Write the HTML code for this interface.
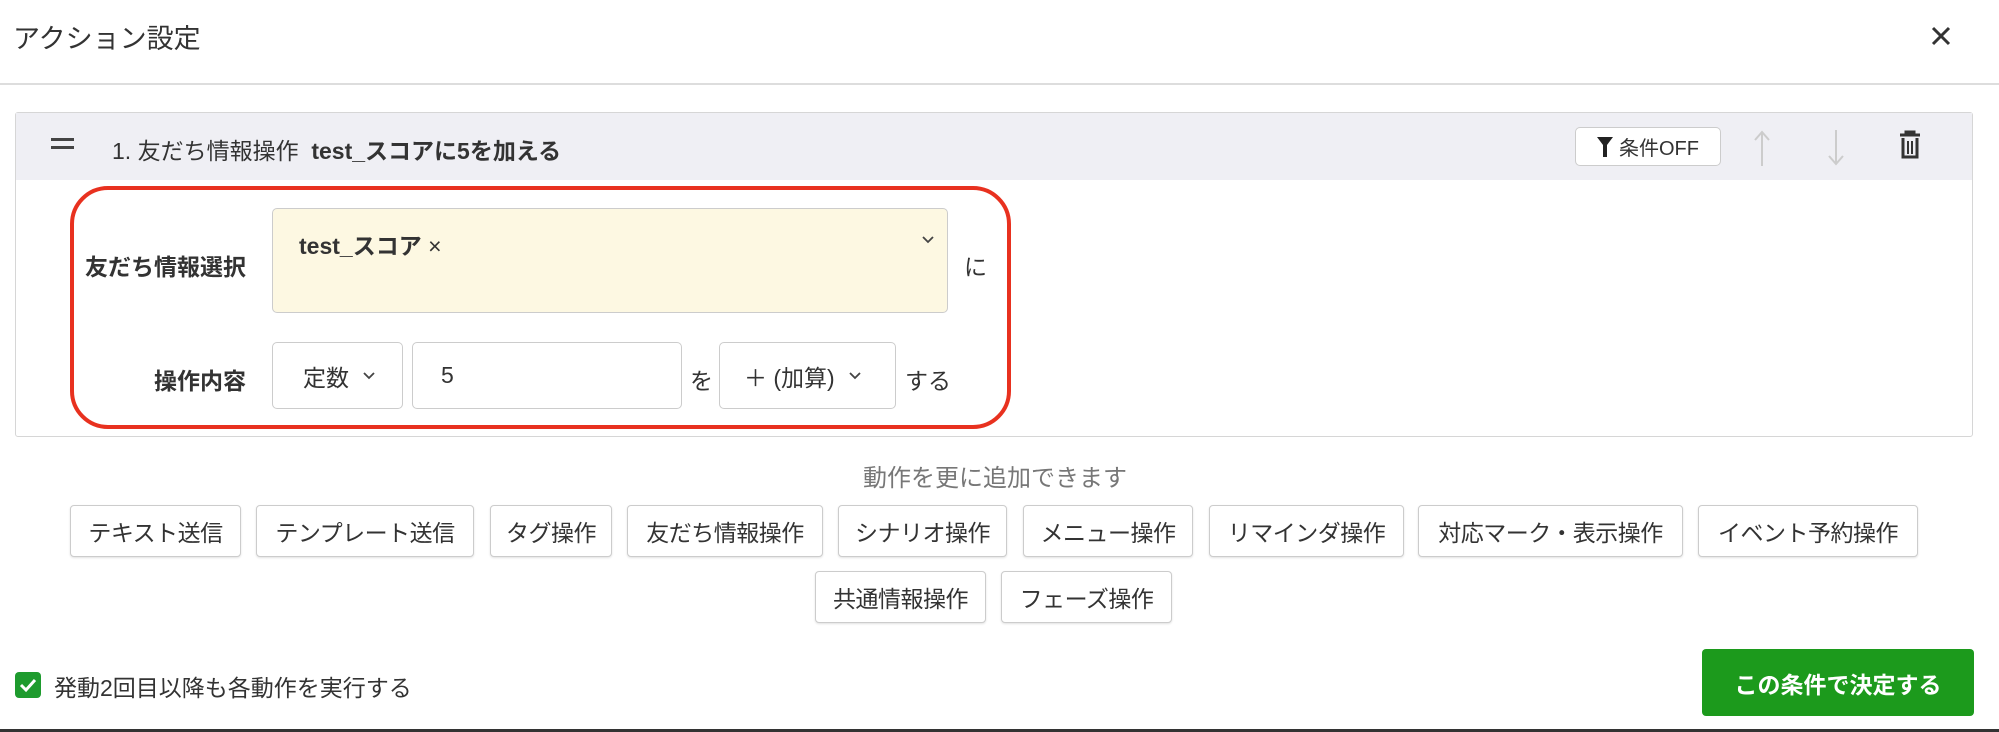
<!DOCTYPE html>
<html><head><meta charset="utf-8"><style>
*{box-sizing:border-box;margin:0;padding:0}
body{width:1999px;height:732px;background:#fff;font-family:"Liberation Sans","Noto Sans CJK JP",sans-serif;color:#333;position:relative;overflow:hidden}
.a{position:absolute}
.btn{position:absolute;top:505px;height:52px;border:1px solid #ccc;border-radius:4px;background:#fff;font-size:23px;letter-spacing:-0.5px;color:#333;display:flex;align-items:center;justify-content:center;box-shadow:0 1px 2px rgba(0,0,0,.12);white-space:nowrap}
.box{position:absolute;border:1px solid #ccc;border-radius:5px;background:#fff;font-size:23px;display:flex;align-items:center}
</style></head><body>
<div class="a" style="left:13px;top:17px;font-size:27px;color:#333">アクション設定</div>
<svg class="a" style="left:1930px;top:25px" width="22" height="22" viewBox="0 0 22 22"><path d="M3 3L19 19M19 3L3 19" stroke="#333" stroke-width="3"/></svg>
<div class="a" style="left:0;top:83px;width:1999px;height:2px;background:#ddd"></div>

<div class="a" style="left:15px;top:112px;width:1958px;height:325px;border:1px solid #d6d6d6;border-radius:3px;background:#fff"></div>
<div class="a" style="left:16px;top:113px;width:1956px;height:67px;background:#efeff4"></div>
<div class="a" style="left:51px;top:138px;width:23px;height:3px;background:#444"></div>
<div class="a" style="left:51px;top:146px;width:23px;height:3px;background:#444"></div>
<div class="a" style="left:112px;top:132px;font-size:23px;color:#333">1. 友だち情報操作 &nbsp;<b>test_スコアに5を加える</b></div>
<div class="a" style="left:1575px;top:127px;width:146px;height:39px;border:1px solid #ccc;border-radius:5px;background:#fff;font-size:20px;display:flex;align-items:center;justify-content:center;gap:6px">
<svg width="16" height="22" viewBox="0 0 16 22"><path d="M0 1H16L10 9V21H6V9Z" fill="#222"/></svg>条件OFF</div>
<svg class="a" style="left:1752px;top:128px" width="20" height="40" viewBox="0 0 20 40"><path d="M10 38V4M3 12L10 4L17 12" stroke="#ccc" stroke-width="2" fill="none"/></svg>
<svg class="a" style="left:1826px;top:128px" width="20" height="40" viewBox="0 0 20 40"><path d="M10 2V36M3 28L10 36L17 28" stroke="#ccc" stroke-width="2" fill="none"/></svg>
<svg class="a" style="left:1898px;top:130px" width="24" height="30" viewBox="0 0 24 30"><path d="M2 5H22M8 5V2H16V5M5 8V27H19V8" stroke="#333" stroke-width="3" fill="none"/><path d="M10 11V24M14 11V24" stroke="#333" stroke-width="2"/></svg>

<div class="a" style="left:70px;top:186px;width:941px;height:243px;border:4px solid #e8311f;border-radius:38px"></div>
<div class="a" style="left:60px;top:248px;width:186px;text-align:right;font-size:23px;font-weight:bold;white-space:nowrap">友だち情報選択</div>
<div class="a" style="left:272px;top:208px;width:676px;height:105px;border:1px solid #ccc;border-radius:5px;background:#fdf8e2"></div>
<div class="a" style="left:299px;top:227px;font-size:23px;font-weight:bold">test_スコア <span style="font-weight:normal">×</span></div>
<svg class="a" style="left:922px;top:236px" width="12" height="8" viewBox="0 0 12 8"><path d="M1 1L6 6L11 1" stroke="#444" stroke-width="1.8" fill="none"/></svg>
<div class="a" style="left:964px;top:248px;font-size:23px">に</div>
<div class="a" style="left:60px;top:362px;width:186px;text-align:right;font-size:23px;font-weight:bold">操作内容</div>
<div class="box" style="left:272px;top:342px;width:131px;height:67px;padding-left:30px">定数<svg style="margin-left:14px" width="12" height="8" viewBox="0 0 12 8"><path d="M1 1L6 6L11 1" stroke="#444" stroke-width="1.8" fill="none"/></svg></div>
<div class="box" style="left:412px;top:342px;width:270px;height:67px;padding-left:28px">5</div>
<div class="a" style="left:690px;top:362px;font-size:23px">を</div>
<div class="box" style="left:719px;top:342px;width:177px;height:67px;padding-left:24px;white-space:nowrap">＋ (加算)<svg style="margin-left:14px" width="12" height="8" viewBox="0 0 12 8"><path d="M1 1L6 6L11 1" stroke="#444" stroke-width="1.8" fill="none"/></svg></div>
<div class="a" style="left:905px;top:362px;font-size:23px">する</div>

<div class="a" style="left:0;top:458px;width:1990px;text-align:center;font-size:24px;color:#777">動作を更に追加できます</div>
<div class="btn" style="left:70px;width:171px">テキスト送信</div>
<div class="btn" style="left:256px;width:218px">テンプレート送信</div>
<div class="btn" style="left:490px;width:122px">タグ操作</div>
<div class="btn" style="left:627px;width:196px">友だち情報操作</div>
<div class="btn" style="left:838px;width:169px">シナリオ操作</div>
<div class="btn" style="left:1023px;width:170px">メニュー操作</div>
<div class="btn" style="left:1209px;width:195px">リマインダ操作</div>
<div class="btn" style="left:1418px;width:265px">対応マーク・表示操作</div>
<div class="btn" style="left:1698px;width:220px">イベント予約操作</div>
<div class="btn" style="left:815px;top:571px;width:171px">共通情報操作</div>
<div class="btn" style="left:1001px;top:571px;width:171px">フェーズ操作</div>

<div class="a" style="left:15px;top:672px;width:26px;height:26px;border-radius:4px;background:#1e9b2e"></div>
<svg class="a" style="left:19px;top:677px" width="18" height="16" viewBox="0 0 18 16"><path d="M2 8L7 13L16 3" stroke="#fff" stroke-width="3" fill="none"/></svg>
<div class="a" style="left:54px;top:669px;font-size:23px">発動2回目以降も各動作を実行する</div>
<div class="a" style="left:1702px;top:649px;width:272px;height:67px;background:#1c9a1c;border-radius:4px;color:#fff;font-size:23px;font-weight:bold;display:flex;align-items:center;justify-content:center">この条件で決定する</div>
<div class="a" style="left:0;top:729px;width:1999px;height:3px;background:#333"></div>
</body></html>
